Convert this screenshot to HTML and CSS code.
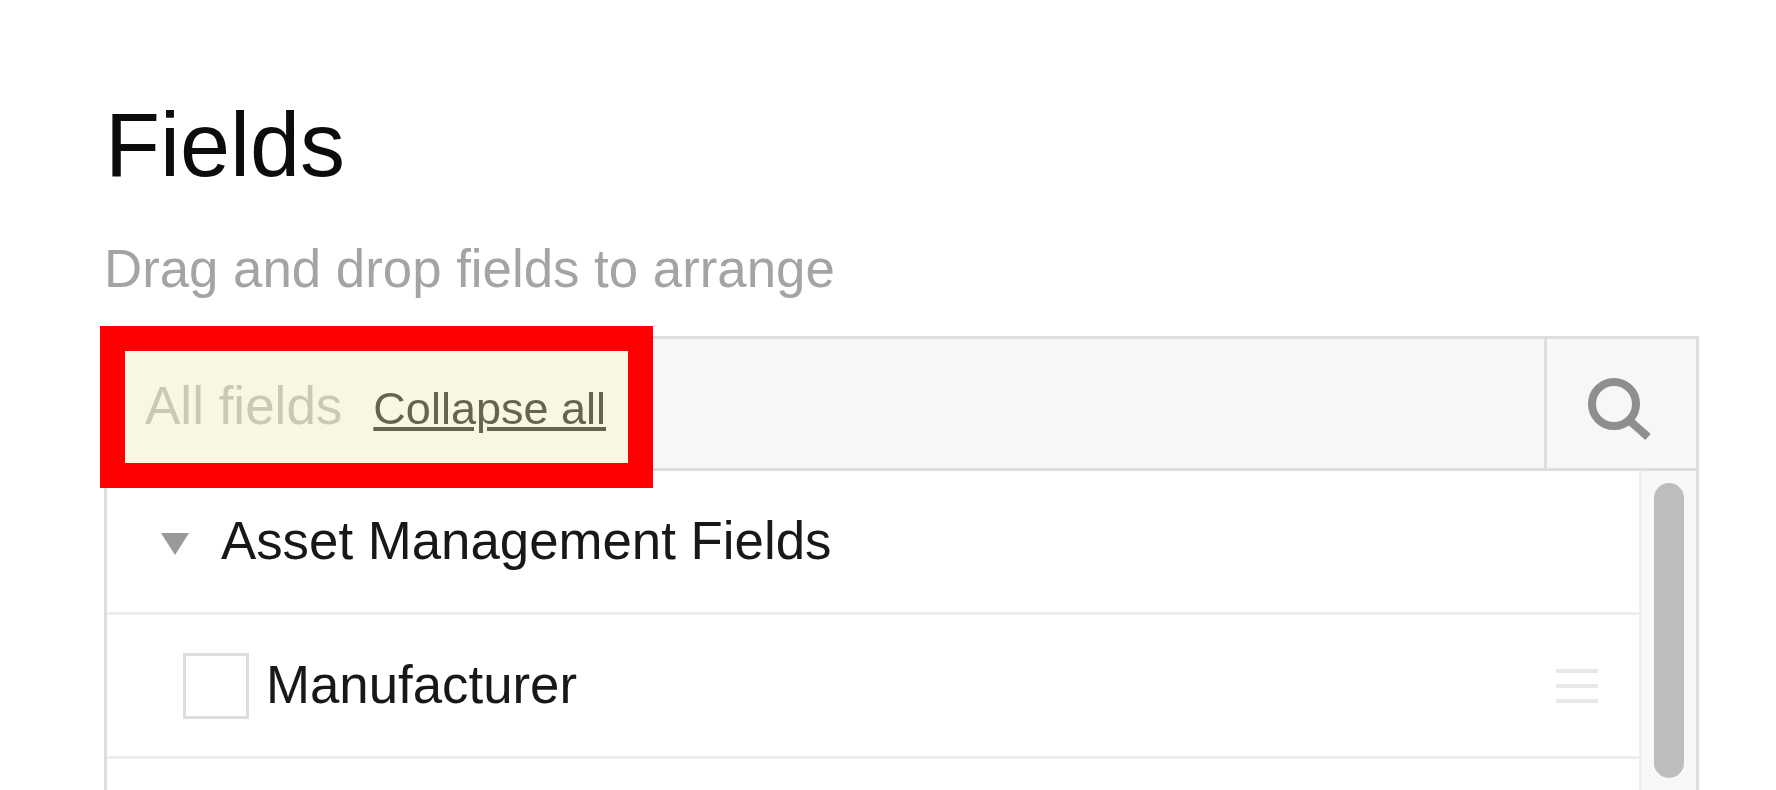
FILE: index.html
```html
<!DOCTYPE html>
<html lang="en">
<head>
<meta charset="utf-8">
<title>Fields</title>
<link rel="stylesheet" href="styles.css">
</head>
<body>
<main class="page">
  <h1 class="title">Fields</h1>
  <p class="hint">Drag and drop fields to arrange</p>
  <section class="panel">
    <header class="toolbar">
      <div class="toolbar-main">
        <span class="toolbar-label">All fields</span>
        <a class="toolbar-link" href="#">Collapse all</a>
      </div>
      <button class="search" type="button" aria-label="Search">
        <svg class="search-icon" viewBox="0 0 64 64" aria-hidden="true">
          <circle cx="26" cy="26" r="22" fill="none" stroke="currentColor" stroke-width="8"/>
          <path d="M42 43 L60 59" fill="none" stroke="currentColor" stroke-width="8"/>
        </svg>
      </button>
    </header>
    <div class="body">
      <ul class="rows">
        <li class="row row-group">
          <span class="caret"></span>
          <span class="row-text">Asset Management Fields</span>
        </li>
        <li class="row row-field">
          <span class="check"></span>
          <span class="row-text">Manufacturer</span>
          <span class="handle"><i></i><i></i><i></i></span>
        </li>
        <li class="row row-field"></li>
      </ul>
      <div class="rail"><div class="thumb"></div></div>
    </div>
  </section>
</main>
<div class="callout"></div>
</body>
</html>
```
FILE: styles.css
```css
* { box-sizing: border-box; }
html, body { margin: 0; height: 790px; overflow: hidden; background: #fff; }
body { font-family: "Liberation Sans", Arial, sans-serif; position: relative; }

.page { padding: 95px 77px 0 105px; filter: blur(.7px); height: 790px; overflow: hidden; }

.title { margin: 0; font-size: 90px; line-height: 100px; font-weight: 400; color: #0c0c0c; }
.hint { margin: 44px 0 0 -1px; font-size: 52.8px; line-height: 60px; color: #a4a4a4; }

.panel { margin: 37px 0 0 -1px; border: 3px solid #ddd; }

.toolbar { display: flex; height: 132px; background: #f7f7f7; border-bottom: 3px solid #ddd; }
.toolbar-main { flex: 1; display: flex; align-items: baseline; padding: 37px 0 0 38px; }
.toolbar-label { font-size: 53px; line-height: 60px; color: #bdbdbd; }
.toolbar-link { margin-left: 31px; font-size: 45px; line-height: 60px; color: #3f3f3f; text-decoration: underline; }
.search { width: 152px; border: 0; border-left: 3px solid #ddd; background: none; padding: 12px 0 0 41px; color: #8e8e8e; text-align: left; }
.search-icon { display: block; width: 64px; height: 64px; }

.body { display: flex; }
.rows { flex: 1; margin: 0; padding: 0; list-style: none; }
.row { display: flex; align-items: center; height: 144px; border-bottom: 3px solid #eee; font-size: 52.8px; color: #181818; }
.row-group { padding-left: 54px; }
.row-field { padding-left: 76px; }
.caret { width: 0; height: 0; border-left: 14px solid transparent; border-right: 14px solid transparent; border-top: 22px solid #999; margin-right: 32px; margin-top: 5px; }
.check { flex: none; width: 66px; height: 66px; border: 3px solid #ddd; margin-right: 17px; }
.row-text { white-space: nowrap; margin-top: -3px; }
.handle { margin-left: auto; margin-right: 41px; display: flex; flex-direction: column; gap: 11px; }
.handle i { display: block; width: 42px; height: 4px; background: #e8e8e8; }

.rail { flex: none; width: 57px; background: #f8f8f8; border-left: 3px solid #eee; padding: 12px 0 0 12px; }
.thumb { width: 30px; height: 295px; border-radius: 15px; background: #bdbdbd; }

.callout { position: absolute; left: 100px; top: 326px; width: 553px; height: 162px; border: 25px solid #f00; background: rgba(255, 250, 140, .2); }
```
